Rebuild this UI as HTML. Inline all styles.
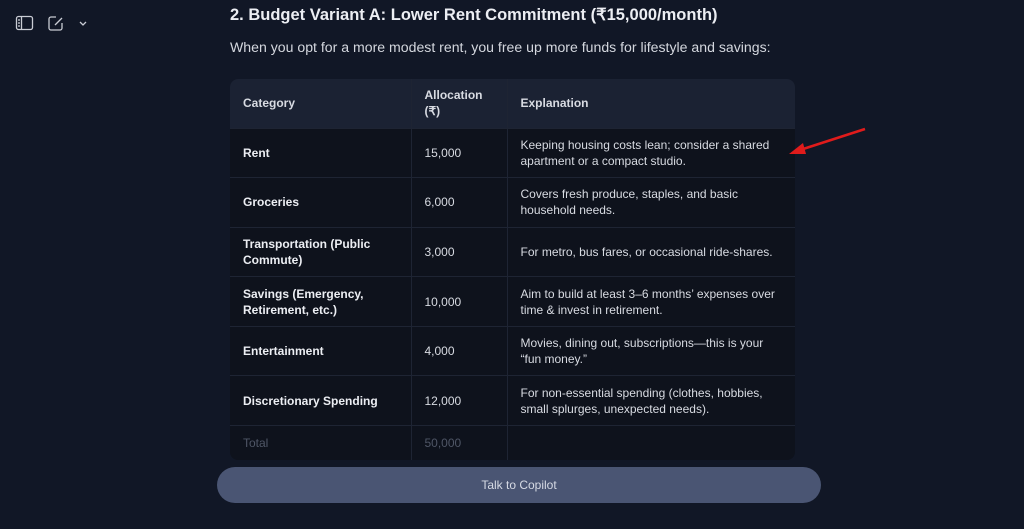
<!DOCTYPE html>
<html><head><meta charset="utf-8"><style>
html,body{margin:0;padding:0;}
body{width:1024px;height:529px;background:#111726;overflow:hidden;position:relative;font-family:"Liberation Sans",sans-serif;color:#e6e8ee;}
.h{position:absolute;left:230px;top:5px;font-size:16.5px;font-weight:bold;color:#eceef3;}
.p{position:absolute;left:230px;top:39px;font-size:14.1px;color:#d4d7de;}
.tbl{position:absolute;left:230px;top:79px;width:565px;border-radius:8px;overflow:hidden;background:#0e121c;}
table{border-collapse:collapse;width:100%;font-size:12px;}
td,th{border:1px solid #1e2433;padding:0 13px;text-align:left;vertical-align:middle;height:49.6px;box-sizing:border-box;line-height:16px;}
th{background:#1b2233;font-weight:bold;color:#d8dbe2;height:49px;}
tr:first-child th{border-top:none;}
td:first-child,th:first-child{border-left:none;}
td:last-child,th:last-child{border-right:none;}
td.c{font-weight:bold;color:#eceef3;}
td{color:#d8dbe2;}
tr.t td{height:34px;color:#4f5666;border-bottom:none;vertical-align:top;padding-top:9px;}
.btn{position:absolute;left:217px;top:467px;width:604px;height:36px;border-radius:18px;background:#4a5573;color:#d6dae4;font-size:12px;text-align:center;line-height:36px;}
</style></head><body>
<svg style="position:absolute;left:14px;top:14px" width="80" height="20" viewBox="0 0 80 20" fill="none" stroke="#c9ccd4" stroke-width="1.3">
<rect x="2.5" y="2.5" width="16" height="13" rx="2"/><line x1="7.5" y1="2.5" x2="7.5" y2="15.5"/><line x1="4" y1="6" x2="6" y2="6"/><line x1="4" y1="9" x2="6" y2="9"/><line x1="4" y1="12" x2="6" y2="12"/>
<path d="M42 3H37a2 2 0 0 0-2 2v9a2 2 0 0 0 2 2h9a2 2 0 0 0 2-2V9"/><path d="M41 11l7-7"/>
<path d="M66 8l3 3 3-3"/>
</svg>
<div class="h">2. Budget Variant A: Lower Rent Commitment (₹15,000/month)</div>
<div class="p">When you opt for a more modest rent, you free up more funds for lifestyle and savings:</div>
<div class="tbl"><table>
<colgroup><col style="width:181px"><col style="width:96px"><col></colgroup>
<tr><th>Category</th><th>Allocation<br>(₹)</th><th>Explanation</th></tr>
<tr><td class="c">Rent</td><td>15,000</td><td>Keeping housing costs lean; consider a shared apartment or a compact studio.</td></tr>
<tr><td class="c">Groceries</td><td>6,000</td><td>Covers fresh produce, staples, and basic household needs.</td></tr>
<tr><td class="c">Transportation (Public Commute)</td><td>3,000</td><td>For metro, bus fares, or occasional ride-shares.</td></tr>
<tr><td class="c">Savings (Emergency, Retirement, etc.)</td><td>10,000</td><td>Aim to build at least 3–6 months’ expenses over time &amp; invest in retirement.</td></tr>
<tr><td class="c">Entertainment</td><td>4,000</td><td>Movies, dining out, subscriptions—this is your “fun money.”</td></tr>
<tr><td class="c">Discretionary Spending</td><td>12,000</td><td>For non-essential spending (clothes, hobbies, small splurges, unexpected needs).</td></tr>
<tr class="t"><td>Total</td><td>50,000</td><td></td></tr>
</table></div>
<svg style="position:absolute;left:780px;top:120px" width="100" height="45" viewBox="780 120 100 45">
<line x1="865" y1="129" x2="800" y2="150" stroke="#e01b1b" stroke-width="2.5"/>
<polygon points="789,154 803,143 806,154" fill="#e01b1b"/>
</svg>
<div class="btn">Talk to Copilot</div>
</body></html>
